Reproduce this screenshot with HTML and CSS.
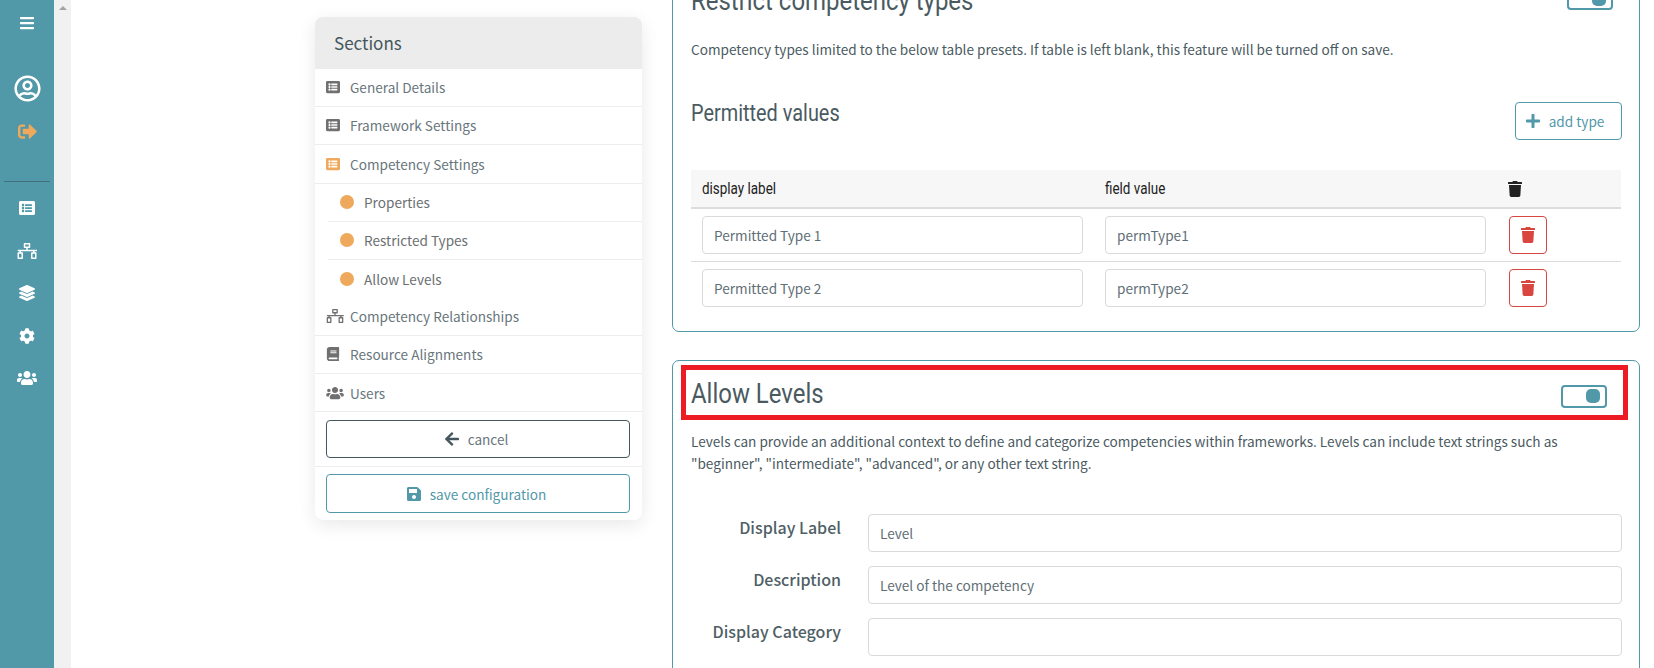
FILE: index.html
```html
<!DOCTYPE html>
<html lang="en">
<head>
<meta charset="utf-8">
<title>Framework configuration</title>
<link rel="stylesheet" href="styles.css">
</head>
<body>
<svg class="defs" aria-hidden="true">
  <symbol id="i-bars" viewBox="0 0 448 512"><path d="M16 132h416c8.837 0 16-7.163 16-16V76c0-8.837-7.163-16-16-16H16C7.163 60 0 67.163 0 76v40c0 8.837 7.163 16 16 16zm0 160h416c8.837 0 16-7.163 16-16v-40c0-8.837-7.163-16-16-16H16c-8.837 0-16 7.163-16 16v40c0 8.837 7.163 16 16 16zm0 160h416c8.837 0 16-7.163 16-16v-40c0-8.837-7.163-16-16-16H16c-8.837 0-16 7.163-16 16v40c0 8.837 7.163 16 16 16z"/></symbol>
  <symbol id="i-user" viewBox="0 0 496 512"><path d="M248 104c-53 0-96 43-96 96s43 96 96 96 96-43 96-96-43-96-96-96zm0 144c-26.5 0-48-21.5-48-48s21.5-48 48-48 48 21.5 48 48-21.5 48-48 48zm0-240C111 8 0 119 0 256s111 248 248 248 248-111 248-248S385 8 248 8zm0 448c-49.7 0-95.1-18.3-130.1-48.4 14.9-23 40.4-38.6 69.6-39.5 20.8 6.4 40.6 9.6 60.5 9.6s39.7-3.1 60.5-9.6c29.2 1 54.7 16.5 69.6 39.5-35 30.1-80.4 48.4-130.1 48.4zm162.7-84.1c-24.4-31.4-62.1-51.9-105.1-51.9-10.2 0-26 9.6-57.6 9.6-31.5 0-47.4-9.6-57.6-9.6-42.9 0-80.6 20.5-105.1 51.9C61.9 339.2 48 299.2 48 256c0-110.3 89.7-200 200-200s200 89.7 200 200c0 43.2-13.9 83.2-37.3 115.9z"/></symbol>
  <symbol id="i-signout" viewBox="0 0 512 512"><path d="M497 273L329 441c-15 15-41 4.5-41-17v-96H152c-13.3 0-24-10.7-24-24v-96c0-13.3 10.7-24 24-24h136V88c0-21.4 25.9-32 41-17l168 168c9.3 9.4 9.3 24.6 0 34zM192 436v-40c0-6.6-5.4-12-12-12H96c-17.7 0-32-14.3-32-32V160c0-17.7 14.3-32 32-32h84c6.6 0 12-5.4 12-12V76c0-6.6-5.4-12-12-12H96c-53 0-96 43-96 96v192c0 53 43 96 96 96h84c6.6 0 12-5.4 12-12z"/></symbol>
  <symbol id="i-list" viewBox="0 0 512 512"><path d="M464 480H48c-26.51 0-48-21.49-48-48V80c0-26.51 21.49-48 48-48h416c26.51 0 48 21.49 48 48v352c0 26.51-21.49 48-48 48zM128 120c-22.091 0-40 17.909-40 40s17.909 40 40 40 40-17.909 40-40-17.909-40-40-40zm0 96c-22.091 0-40 17.909-40 40s17.909 40 40 40 40-17.909 40-40-17.909-40-40-40zm0 96c-22.091 0-40 17.909-40 40s17.909 40 40 40 40-17.909 40-40-17.909-40-40-40zm288-136v-32c0-6.627-5.373-12-12-12H204c-6.627 0-12 5.373-12 12v32c0 6.627 5.373 12 12 12h200c6.627 0 12-5.373 12-12zm0 96v-32c0-6.627-5.373-12-12-12H204c-6.627 0-12 5.373-12 12v32c0 6.627 5.373 12 12 12h200c6.627 0 12-5.373 12-12zm0 96v-32c0-6.627-5.373-12-12-12H204c-6.627 0-12 5.373-12 12v32c0 6.627 5.373 12 12 12h200c6.627 0 12-5.373 12-12z"/></symbol>
  <symbol id="i-sitemap" viewBox="0 0 640 512"><path fill-rule="evenodd" d="M240 0h160a24 24 0 0 1 24 24v112a24 24 0 0 1-24 24h-56v56h296v48H24v-48h272v-56h-56a24 24 0 0 1-24-24V24a24 24 0 0 1 24-24zm24 48v64h112V48zM80 264h48v32h40a24 24 0 0 1 24 24v168a24 24 0 0 1-24 24H40a24 24 0 0 1-24-24V320a24 24 0 0 1 24-24h40zM64 344v120h80V344zM512 264h48v32h40a24 24 0 0 1 24 24v168a24 24 0 0 1-24 24H472a24 24 0 0 1-24-24V320a24 24 0 0 1 24-24h40zM496 344v120h80V344z"/></symbol>
  <symbol id="i-layers" viewBox="0 0 512 512"><path d="M12.41 148.02l232.94 105.67c6.8 3.09 14.49 3.09 21.29 0l232.94-105.67c16.55-7.51 16.55-32.52 0-40.03L266.65 2.31a25.607 25.607 0 0 0-21.29 0L12.41 107.98c-16.55 7.51-16.55 32.53 0 40.04zm487.18 88.28l-58.09-26.33-161.64 73.27c-7.56 3.43-15.59 5.17-23.86 5.17s-16.29-1.74-23.86-5.17L70.51 209.97l-58.1 26.33c-16.55 7.5-16.55 32.5 0 40l232.94 105.59c6.8 3.08 14.49 3.08 21.29 0L499.59 276.3c16.55-7.5 16.55-32.5 0-40zm0 127.8l-57.87-26.23-161.86 73.37c-7.56 3.43-15.59 5.17-23.86 5.17s-16.29-1.74-23.86-5.17L70.29 337.87 12.41 364.1c-16.55 7.5-16.55 32.5 0 40l232.94 105.59c6.8 3.08 14.49 3.08 21.29 0L499.59 404.1c16.55-7.5 16.55-32.5 0-40z"/></symbol>
  <symbol id="i-cog" viewBox="0 0 512 512"><path d="M487.4 315.7l-42.6-24.6c4.3-23.2 4.3-47 0-70.2l42.6-24.6c4.9-2.8 7.1-8.6 5.5-14-11.1-35.6-30-67.8-54.7-94.6-3.8-4.1-10-5.1-14.8-2.3L380.8 110c-17.9-15.4-38.5-27.3-60.8-35.1V25.8c0-5.6-3.9-10.5-9.4-11.7-36.7-8.2-74.3-7.8-109.2 0-5.5 1.2-9.4 6.1-9.4 11.7V75c-22.2 7.9-42.8 19.8-60.8 35.1L88.7 85.5c-4.9-2.8-11-1.9-14.8 2.3-24.7 26.7-43.6 58.9-54.7 94.6-1.7 5.4.6 11.2 5.5 14L67.3 221c-4.3 23.2-4.3 47 0 70.2l-42.6 24.6c-4.9 2.8-7.1 8.6-5.5 14 11.1 35.6 30 67.8 54.7 94.6 3.8 4.1 10 5.1 14.8 2.3l42.6-24.6c17.9 15.4 38.5 27.3 60.8 35.1v49.2c0 5.6 3.9 10.5 9.4 11.7 36.7 8.2 74.3 7.8 109.2 0 5.5-1.2 9.4-6.1 9.4-11.7v-49.2c22.2-7.9 42.8-19.8 60.8-35.1l42.6 24.6c4.9 2.8 11 1.9 14.8-2.3 24.7-26.7 43.6-58.9 54.7-94.6 1.5-5.5-.7-11.3-5.6-14.1zM256 336c-44.1 0-80-35.9-80-80s35.9-80 80-80 80 35.9 80 80-35.9 80-80 80z"/></symbol>
  <symbol id="i-users" viewBox="0 0 640 512"><path d="M96 224c35.3 0 64-28.7 64-64s-28.7-64-64-64-64 28.7-64 64 28.7 64 64 64zm448 0c35.3 0 64-28.7 64-64s-28.7-64-64-64-64 28.7-64 64 28.7 64 64 64zm32 32h-64c-17.6 0-33.5 7.1-45.1 18.6 40.3 22.1 68.9 62 75.1 109.4h66c17.7 0 32-14.3 32-32v-32c0-35.3-28.7-64-64-64zm-256 0c61.9 0 112-50.1 112-112S381.9 32 320 32 208 82.1 208 144s50.1 112 112 112zm76.8 32h-8.3c-20.8 10-43.9 16-68.5 16s-47.6-6-68.5-16h-8.3C179.6 288 128 339.6 128 403.2V432c0 26.5 21.5 48 48 48h288c26.5 0 48-21.5 48-48v-28.8c0-63.6-51.6-115.2-115.2-115.2zm-223.7-13.4C161.5 263.1 145.6 256 128 256H64c-35.3 0-64 28.7-64 64v32c0 17.7 14.3 32 32 32h65.9c6.3-47.4 34.9-87.3 75.2-109.4z"/></symbol>
  <symbol id="i-book" viewBox="0 0 448 512"><path d="M448 360V24c0-13.3-10.7-24-24-24H96C43 0 0 43 0 96v320c0 53 43 96 96 96h328c13.3 0 24-10.7 24-24v-16c0-7.5-3.5-14.3-8.9-18.7-4.2-15.4-4.2-59.3 0-74.7 5.4-4.3 8.9-11.1 8.9-18.6zM128 134c0-3.3 2.7-6 6-6h212c3.3 0 6 2.7 6 6v20c0 3.3-2.7 6-6 6H134c-3.3 0-6-2.7-6-6v-20zm0 64c0-3.3 2.7-6 6-6h212c3.3 0 6 2.7 6 6v20c0 3.3-2.7 6-6 6H134c-3.3 0-6-2.7-6-6v-20zm253.4 250H96c-17.7 0-32-14.3-32-32 0-17.6 14.4-32 32-32h285.4c-1.9 17.1-1.9 46.9 0 64z"/></symbol>
  <symbol id="i-arrow" viewBox="0 0 448 512"><path d="M257.5 445.1l-22.2 22.2c-9.4 9.4-24.6 9.4-33.9 0L7 273c-9.4-9.4-9.4-24.6 0-33.9L201.4 44.7c9.4-9.4 24.6-9.4 33.9 0l22.2 22.2c9.5 9.5 9.3 25-.4 34.3L136.6 216H424c13.3 0 24 10.7 24 24v32c0 13.3-10.7 24-24 24H136.6l120.5 114.8c9.8 9.3 10 24.8.4 34.3z"/></symbol>
  <symbol id="i-save" viewBox="0 0 448 512"><path d="M433.941 129.941l-83.882-83.882A48 48 0 0 0 316.118 32H48C21.49 32 0 53.49 0 80v352c0 26.51 21.49 48 48 48h352c26.51 0 48-21.49 48-48V163.882a48 48 0 0 0-14.059-33.941zM224 416c-35.346 0-64-28.654-64-64 0-35.346 28.654-64 64-64s64 28.654 64 64c0 35.346-28.654 64-64 64zm96-304.52V212c0 6.627-5.373 12-12 12H76c-6.627 0-12-5.373-12-12V108c0-6.627 5.373-12 12-12h228.52c3.183 0 6.235 1.264 8.485 3.515l3.48 3.48A11.996 11.996 0 0 1 320 111.48z"/></symbol>
  <symbol id="i-plus" viewBox="0 0 448 512"><path d="M416 208H272V64c0-17.67-14.33-32-32-32h-32c-17.67 0-32 14.33-32 32v144H32c-17.67 0-32 14.33-32 32v32c0 17.67 14.33 32 32 32h144v144c0 17.67 14.33 32 32 32h32c17.67 0 32-14.33 32-32V304h144c17.67 0 32-14.33 32-32v-32c0-17.67-14.33-32-32-32z"/></symbol>
  <symbol id="i-trash" viewBox="0 0 448 512"><path d="M432 32H312l-9.4-18.7A24 24 0 0 0 281.1 0H166.8a23.72 23.72 0 0 0-21.4 13.3L136 32H16A16 16 0 0 0 0 48v32a16 16 0 0 0 16 16h416a16 16 0 0 0 16-16V48a16 16 0 0 0-16-16zM53.2 467a48 48 0 0 0 47.9 45h245.8a48 48 0 0 0 47.9-45L416 128H32z"/></symbol>
</svg>

<nav class="rail">
  <svg class="rail-bars"><use href="#i-bars"/></svg>
  <div class="rail-account">
    <svg class="rail-user"><use href="#i-user"/></svg>
    <svg class="rail-signout"><use href="#i-signout"/></svg>
  </div>
  <div class="rail-links">
    <svg class="rail-icon"><use href="#i-list"/></svg>
    <svg class="rail-icon"><use href="#i-sitemap"/></svg>
    <svg class="rail-icon"><use href="#i-layers"/></svg>
    <svg class="rail-icon"><use href="#i-cog"/></svg>
    <svg class="rail-icon"><use href="#i-users"/></svg>
  </div>
</nav>

<div class="gutter"><span class="gutter-arrow"></span></div>

<main class="content">
  <aside class="sections">
    <h2 class="sections-title">Sections</h2>
    <ul class="section-list">
      <li class="section-row"><svg class="row-icon"><use href="#i-list"/></svg>General Details</li>
      <li class="section-row"><svg class="row-icon"><use href="#i-list"/></svg>Framework Settings</li>
      <li class="section-row section-row-tall"><svg class="row-icon row-icon-active"><use href="#i-list"/></svg>Competency Settings</li>
      <li class="section-sub"><span class="dot"></span>Properties</li>
      <li class="section-sub"><span class="dot"></span>Restricted Types</li>
      <li class="section-sub section-sub-last"><span class="dot"></span>Allow Levels</li>
      <li class="section-row"><svg class="row-icon row-icon-wide"><use href="#i-sitemap"/></svg>Competency Relationships</li>
      <li class="section-row"><svg class="row-icon"><use href="#i-book"/></svg>Resource Alignments</li>
      <li class="section-row section-row-last"><svg class="row-icon row-icon-wide"><use href="#i-users"/></svg>Users</li>
    </ul>
    <div class="action action-cancel"><button class="btn btn-dark"><svg class="btn-icon"><use href="#i-arrow"/></svg>cancel</button></div>
    <div class="action action-save"><button class="btn btn-teal"><svg class="btn-icon"><use href="#i-save"/></svg>save configuration</button></div>
  </aside>

  <div class="panels">
    <section class="panel panel-types">
      <header class="panel-head panel-head-types">
        <h3 class="panel-title"><span class="narrow">Restrict competency types</span></h3>
        <span class="toggle"><span class="knob"></span></span>
      </header>
      <p class="panel-desc">Competency types limited to the below table presets. If table is left blank, this feature will be turned off on save.</p>
      <div class="values-head">
        <h4 class="values-title"><span class="narrow">Permitted values</span></h4>
        <button class="btn btn-teal btn-add"><svg class="btn-icon"><use href="#i-plus"/></svg>add type</button>
      </div>
      <table class="values">
        <thead>
          <tr>
            <th class="col-label"><span class="narrow">display label</span></th>
            <th class="col-value"><span class="narrow">field value</span></th>
            <th class="col-del"><svg class="th-trash"><use href="#i-trash"/></svg></th>
          </tr>
        </thead>
        <tbody>
          <tr>
            <td><input class="field" value="Permitted Type 1"></td>
            <td><input class="field" value="permType1"></td>
            <td class="col-del"><button class="btn-del"><svg class="del-icon"><use href="#i-trash"/></svg></button></td>
          </tr>
          <tr>
            <td><input class="field" value="Permitted Type 2"></td>
            <td><input class="field" value="permType2"></td>
            <td class="col-del"><button class="btn-del"><svg class="del-icon"><use href="#i-trash"/></svg></button></td>
          </tr>
        </tbody>
      </table>
    </section>

    <section class="panel panel-levels">
      <header class="panel-head panel-head-levels">
        <h3 class="panel-title"><span class="narrow">Allow Levels</span></h3>
        <span class="toggle toggle-levels"><span class="knob"></span></span>
        <span class="highlight"></span>
      </header>
      <p class="panel-desc panel-desc-levels">Levels can provide an additional context to define and categorize competencies within frameworks. Levels can include text strings such as "beginner", "intermediate", "advanced", or any other text string.</p>
      <div class="form">
        <label class="form-label">Display Label</label><input class="field" value="Level">
        <label class="form-label">Description</label><input class="field" value="Level of the competency">
        <label class="form-label">Display Category</label><input class="field" value="">
      </div>
    </section>
  </div>
</main>
</body>
</html>
```

FILE: styles.css
```css
* { box-sizing: border-box; }
html, body { margin: 0; height: 668px; overflow: hidden; }
body {
  display: flex;
  background: #fff;
  font-family: "Noto Sans CJK SC", "Open Sans", sans-serif;
  color: #4a5a61;
  font-size: 13.6px;
}
.defs { display: none; }

.rail {
  width: 54px;
  flex: none;
  background: #5198a9;
  display: flex;
  flex-direction: column;
  align-items: center;
}
.rail svg { fill: #fff; display: block; }
.rail-bars { width: 14px; height: 16px; margin-top: 15px; }
.rail-account { display: flex; flex-direction: column; align-items: center; margin-top: 44px; height: 107px; border-bottom: 1px solid #44707c; width: 46px; }
.rail .rail-user { width: 27px; height: 27px; flex: none; }
.rail .rail-signout { width: 19px; height: 19px; margin-top: 20px; fill: #eea95c; flex: none; }
.rail-links { display: flex; flex-direction: column; align-items: center; margin-top: 18px; gap: 26.5px; }
.rail-icon { width: 20px; height: 16px; }

.gutter { width: 17px; flex: none; background: #f1f1f1; padding: 6px 0 0 5px; }
.gutter-arrow { display: block; width: 0; height: 0; border-left: 4px solid transparent; border-right: 4px solid transparent; border-bottom: 4px solid #a3a3a3; }

.content { flex: 1; display: flex; align-items: flex-start; padding-left: 244px; }

.sections {
  width: 327px;
  margin-top: 17px;
  border-radius: 8px;
  box-shadow: 0 5px 18px rgba(0,0,0,.09);
  background: #fff;
  flex: none;
}
.sections-title {
  margin: 0;
  height: 52px;
  padding: 0 19px;
  background: #ececec;
  border-radius: 8px 8px 0 0;
  font-size: 17px;
  font-weight: 400;
  line-height: 52px;
  color: #44565d;
}
.section-list { list-style: none; margin: 0; padding: 0; }
.section-row, .section-sub {
  height: 38px;
  padding-bottom: 2px;
  display: flex;
  align-items: center;
  color: #68767c;
  font-size: 13.6px;
  line-height: 20px;
  border-bottom: 1px solid #ededed;
}
.section-row { padding-left: 11px; }
.section-row-tall { height: 39px; padding-bottom: 1px; }
.section-row-last { padding-bottom: 0; }
.section-sub { margin-left: 13px; padding-left: 12px; color: #6b6f71; }
.section-sub-last { border-bottom-color: transparent; padding-bottom: 0; }
.row-icon { width: 14px; height: 14px; margin: 1px 10px 0 0; fill: #707070; flex: none; }
.row-icon-wide { width: 18px; margin-right: 6px; }
.row-icon-active { fill: #eea95c; }
.dot { width: 14px; height: 14px; border-radius: 50%; background: #eea95c; margin: 1px 10px 0 0; flex: none; }

.action { padding: 8px 12px 0 11px; }
.action-cancel { height: 55px; border-bottom: 1px solid #ededed; }
.action-save { height: 53px; padding-top: 7px; }
.btn {
  display: flex;
  align-items: center;
  justify-content: center;
  width: 100%;
  height: 38px;
  padding: 0;
  background: #fff;
  border-radius: 4px;
  font: inherit;
  font-size: 13.6px;
  cursor: pointer;
}
.action .btn { padding-right: 3px; }
.btn-dark { border: 1px solid #45565d; color: #68767c; fill: #45565d; }
.btn-teal { border: 1px solid #5198a9; color: #5198a9; fill: #5198a9; }
.action-save .btn { height: 39px; }
.btn-icon { width: 14px; height: 16px; margin-right: 9px; flex: none; }

.panels { width: 968px; margin-left: 30px; margin-top: -30px; flex: none; }
.panel { border: 1px solid #5198a9; border-radius: 7px; padding: 0 17px 0 18px; background: #fff; }
.panel-types { height: 362px; margin-bottom: 28px; }
.panel-levels { height: 340px; }

.panel-head { display: flex; justify-content: space-between; align-items: center; position: relative; }
.panel-head-types { height: 60px; padding-right: 9px; }
.panel-head-types .toggle { margin-top: -5px; }
.panel-head-levels { height: 59px; padding-top: 7px; padding-right: 15px; }
.toggle-levels { margin-top: 4px; }
.panel-title { margin: 0; font-family: "Roboto", sans-serif; font-weight: 400; font-size: 28.5px; line-height: 32px; color: #4a5a61; }
.narrow { display: inline-block; transform: scaleX(.84); transform-origin: left center; white-space: nowrap; }

.toggle { width: 46px; height: 23px; border: 2px solid #5198a9; border-radius: 4px; display: flex; justify-content: flex-end; align-items: center; padding-right: 5px; flex: none; }
.knob { width: 14px; height: 14px; border-radius: 5px; background: #5198a9; }

.highlight { position: absolute; left: -10px; right: -6px; top: 4px; height: 55px; border: 5px solid #ed1c24; pointer-events: none; }

.panel-desc { margin: 0; font-size: 13.6px; line-height: 22px; color: #4a5a61; }
.panel-types .panel-desc { margin-top: 7px; }
.panel-desc-levels { margin-top: 10px; }

.values-head { display: flex; justify-content: space-between; align-items: flex-start; margin-top: 42px; }
.values-title { margin: -2px 0 0; font-family: "Roboto", sans-serif; font-weight: 400; font-size: 23.7px; line-height: 27px; color: #4a5a61; }
.btn-add { width: 107px; height: 38px; padding-right: 7px; }

.values { width: 930px; border-collapse: collapse; table-layout: fixed; margin-top: 30px; }
.values th {
  background: #f7f7f7;
  height: 38px;
  border-bottom: 2px solid #ddd;
  padding: 0 11px;
  text-align: left;
  font-family: "Roboto", sans-serif;
  font-weight: 400;
  font-size: 16px;
  color: #222;
}
.col-label { width: 403px; }
.col-value { width: 403px; }
.values .col-del { padding-left: 12px; }
.th-trash { display: block; width: 14px; height: 16px; fill: #222; margin-left: -1px; }
.values td { padding: 7px 11px; height: 53px; border-bottom: 1px solid #ddd; }
.values tbody tr:last-child td { border-bottom: none; }

.field {
  display: block;
  width: 100%;
  height: 38px;
  padding: 0 11px;
  border: 1px solid #d9d9d9;
  border-radius: 4px;
  background: #fff;
  font-family: "Noto Sans CJK SC", "Open Sans", sans-serif;
  font-size: 13.6px;
  color: #5f6f76;
  outline: none;
}
.btn-del { display: flex; align-items: center; justify-content: center; width: 38px; height: 38px; padding: 0; border: 1px solid #d9463f; border-radius: 4px; background: #fff; }
.del-icon { width: 14px; height: 16px; fill: #d9463f; }

.form { display: grid; grid-template-columns: 150px 1fr; column-gap: 27px; row-gap: 14px; margin-top: 40px; }
.form-label { font-size: 16px; font-weight: 500; text-align: right; line-height: 26px; color: #4f5f66; }
```
